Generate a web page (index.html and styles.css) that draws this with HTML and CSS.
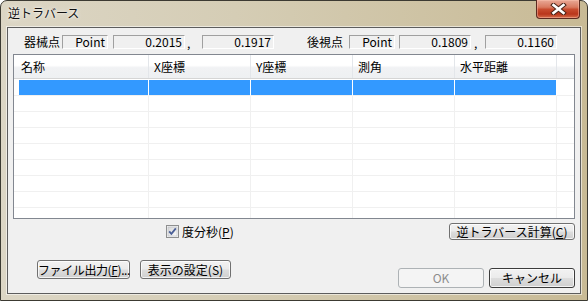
FILE: index.html
```html
<!DOCTYPE html>
<html>
<head>
  <meta charset="utf-8">
  <link rel="stylesheet" href="styles.css">
</head>
<body>
  <div class="window">
    <div class="titlebar">
      <span class="title">逆トラバース</span>
      <div class="close-btn">
        <svg width="17" height="12" viewBox="0 0 17 12">
          <path d="M3.5 2 L13.5 10 M13.5 2 L3.5 10" stroke="#4a2418" stroke-width="4.6" stroke-linecap="square"/>
          <path d="M3.5 2 L13.5 10 M13.5 2 L3.5 10" stroke="#fff" stroke-width="2.6" stroke-linecap="square"/>
        </svg>
      </div>
    </div>

    <div class="client">
      <div class="points">
        <span class="pt-label">器械点</span>
        <span class="field name">Point</span>
        <span class="field num sp5">0.2015</span>
        <span class="comma">,</span>
        <span class="field num">0.1917</span>
        <span class="pt-label back">後視点</span>
        <span class="field name">Point</span>
        <span class="field num sp4">0.1809</span>
        <span class="comma short">,</span>
        <span class="field num">0.1160</span>
      </div>

      <div class="list">
        <div class="list-head">
          <div class="hcol c1">名称</div>
          <div class="hcol">X座標</div>
          <div class="hcol">Y座標</div>
          <div class="hcol">測角</div>
          <div class="hcol">水平距離</div>
          <div class="hcol filler"></div>
        </div>
        <div class="list-body">
          <div class="row sel">
            <div class="cell c1"></div><div class="cell"></div><div class="cell"></div><div class="cell"></div><div class="cell"></div><div class="cell filler"></div>
          </div>
          <div class="row">
            <div class="cell c1"></div><div class="cell"></div><div class="cell"></div><div class="cell"></div><div class="cell"></div><div class="cell filler"></div>
          </div>
          <div class="row">
            <div class="cell c1"></div><div class="cell"></div><div class="cell"></div><div class="cell"></div><div class="cell"></div><div class="cell filler"></div>
          </div>
          <div class="row">
            <div class="cell c1"></div><div class="cell"></div><div class="cell"></div><div class="cell"></div><div class="cell"></div><div class="cell filler"></div>
          </div>
          <div class="row">
            <div class="cell c1"></div><div class="cell"></div><div class="cell"></div><div class="cell"></div><div class="cell"></div><div class="cell filler"></div>
          </div>
          <div class="row">
            <div class="cell c1"></div><div class="cell"></div><div class="cell"></div><div class="cell"></div><div class="cell"></div><div class="cell filler"></div>
          </div>
          <div class="row">
            <div class="cell c1"></div><div class="cell"></div><div class="cell"></div><div class="cell"></div><div class="cell"></div><div class="cell filler"></div>
          </div>
          <div class="row">
            <div class="cell c1"></div><div class="cell"></div><div class="cell"></div><div class="cell"></div><div class="cell"></div><div class="cell filler"></div>
          </div>
          <div class="row">
            <div class="cell c1"></div><div class="cell"></div><div class="cell"></div><div class="cell"></div><div class="cell"></div><div class="cell filler"></div>
          </div>
        </div>
      </div>

      <div class="options">
        <label class="check">
          <svg class="check-box" width="13" height="13" viewBox="0 0 13 13">
            <defs>
              <linearGradient id="cbg" x1="0" y1="0" x2="1" y2="1">
                <stop offset="0" stop-color="#d6d6d6"/>
                <stop offset="1" stop-color="#fbfbfb"/>
              </linearGradient>
            </defs>
            <rect x="0.5" y="0.5" width="12" height="12" fill="#f4f4f4" stroke="#8e8f8f"/>
            <rect x="2" y="2" width="9" height="9" fill="url(#cbg)" stroke="#b8bcc2" stroke-width="0.6"/>
            <path d="M3.2 6.3 L5.4 8.8 L9.8 3.4" fill="none" stroke="#4a5f97" stroke-width="1.8"/>
          </svg>
          <span>度分秒(<u>P</u>)</span>
        </label>
        <button class="btn calc">逆トラバース計算(<u>C</u>)</button>
      </div>

      <div class="footer">
        <div class="left-btns">
          <button class="btn file">ファイル出力(<u>F</u>)...</button>
          <button class="btn disp">表示の設定(S)</button>
        </div>
        <div class="right-btns">
          <button class="btn ok" disabled>OK</button>
          <button class="btn cancel">キャンセル</button>
        </div>
      </div>
    </div>
  </div>
</body>
</html>
```

FILE: styles.css
```css
* {
    box-sizing: border-box;
}

body {
    margin: 0;
    background: #fff;
    font-family: "Noto Sans CJK JP", "Noto Sans", sans-serif;
    font-size: 12px;
    color: #000;
}

.window {
    width: 588px;
    height: 301px;
    display: flex;
    flex-direction: column;
    padding: 0 6px 6px;
    border: 1px solid #3c3a32;
    border-radius: 7px 7px 0 0;
    background: linear-gradient(to right, #dcd6c5 0%, #d5cdb5 40%, #c8ba95 100%);
}

/* title bar */
.titlebar {
    height: 26px;
    display: flex;
    justify-content: space-between;
    align-items: flex-start;
}

.title {
    margin: 4px 0 0 1px;
    line-height: 16px;
    font-size: 12px;
    color: #111;
    text-shadow: 0 0 5px rgba(255, 255, 255, 0.9), 0 0 2px rgba(255, 255, 255, 0.9);
}

.close-btn {
    width: 44px;
    height: 19px;
    margin: -1px 1px 0 0;
    display: flex;
    align-items: center;
    justify-content: center;
    border: 1px solid #5c2a20;
    border-top: none;
    border-radius: 0 0 4px 4px;
    background: linear-gradient(#e9a996 0%, #d97a60 40%, #c84c2f 52%, #b9361c 78%, #d56d4b 100%);
    box-shadow: inset 0 0 0 1px rgba(255, 200, 180, 0.45);
}

/* client area */
.client {
    flex: 1;
    display: flex;
    flex-direction: column;
    padding-top: 7px;
    border: 1px solid #5d5d5d;
    background: #f0f0f0;
    box-shadow: 0 0 0 1px rgba(255, 255, 255, 0.55);
}

.points {
    height: 14px;
    display: flex;
    padding-left: 16px;
    line-height: 12px;
}

.pt-label {
    width: 38px;
    line-height: 14px;
}

.pt-label.back {
    width: 75px;
    padding-right: 6px;
    text-align: right;
}

.field {
    height: 14px;
    padding-right: 2px;
    text-align: right;
    border-top: 1px solid #a0a0a0;
    border-left: 1px solid #a0a0a0;
    border-bottom: 1px solid #fff;
    border-right: 1px solid #fff;
    white-space: nowrap;
}

.field.name {
    width: 46px;
}

.field.num {
    width: 72px;
}

.sp5 {
    margin-left: 5px;
}

.sp4 {
    margin-left: 4px;
}

.comma {
    width: 17px;
    padding-left: 2px;
    line-height: 16px;
}

.comma.short {
    width: 14px;
    padding-left: 3px;
}

/* list view */
.list {
    height: 165px;
    margin: 5px 5px 0;
    border: 1px solid #828790;
    background: #fff;
    overflow: hidden;
}

.list-head {
    height: 24px;
    display: flex;
    border-bottom: 1px solid #d5d5d5;
    background: linear-gradient(#ffffff 0%, #ffffff 45%, #f1f2f4 55%, #eef0f2 100%);
}

.hcol {
    width: 102px;
    padding-left: 5px;
    line-height: 23px;
    border-right: 1px solid #e3e6ea;
}

.hcol.c1 {
    width: 135px;
    padding-left: 7px;
}

.hcol.filler {
    flex: 1;
    border-right: none;
}

.list-body {
    padding-top: 1px;
}

.row {
    height: 16px;
    display: flex;
}

.cell {
    width: 102px;
    border-right: 1px solid #f0f0f0;
    border-bottom: 1px solid #f0f0f0;
}

.cell.c1 {
    width: 135px;
}

.cell.filler {
    flex: 1;
    border-right: none;
}

.row.sel .cell {
    border-right-color: #fff;
    background: #3399ff;
    background-clip: content-box;
}

.row.sel .cell.c1 {
    padding-left: 5px;
}

.row.sel .cell.filler {
    background: none;
}

/* checkbox + calc */
.options {
    height: 17px;
    margin-top: 4px;
    display: flex;
    align-items: center;
    padding-right: 5px;
}

.check {
    display: flex;
    align-items: center;
    gap: 3px;
    margin-left: 158px;
    line-height: 14px;
}

.check-box {
    display: block;
}

.btn {
    height: 17px;
    padding: 0;
    font-family: inherit;
    font-size: 12px;
    line-height: 14px;
    color: #000;
    white-space: nowrap;
    border: 1px solid #707070;
    border-radius: 3px;
    background: linear-gradient(#f2f2f2 0%, #ebebeb 48%, #dddddd 52%, #cfcfcf 100%);
    box-shadow: inset 0 0 0 1px rgba(255, 255, 255, 0.75);
}

.btn.calc {
    width: 126px;
    margin-left: auto;
}

/* bottom buttons */
.footer {
    display: flex;
    justify-content: space-between;
    padding: 0 5px 0 29px;
}

.left-btns {
    display: flex;
    gap: 10px;
    margin-top: 20px;
}

.left-btns .btn {
    height: 19px;
}

.btn.file {
    width: 93px;
    letter-spacing: -0.4px;
}

.btn.disp {
    width: 91px;
}

.right-btns {
    display: flex;
    gap: 5px;
    margin-top: 28px;
}

.right-btns .btn {
    width: 86px;
    height: 20px;
}

.btn.ok {
    color: #8d8d8d;
    border-color: #adb2b5;
    background: #f4f4f4;
    box-shadow: none;
}

.btn.cancel {
    border-color: #3c3c3c;
}
```
